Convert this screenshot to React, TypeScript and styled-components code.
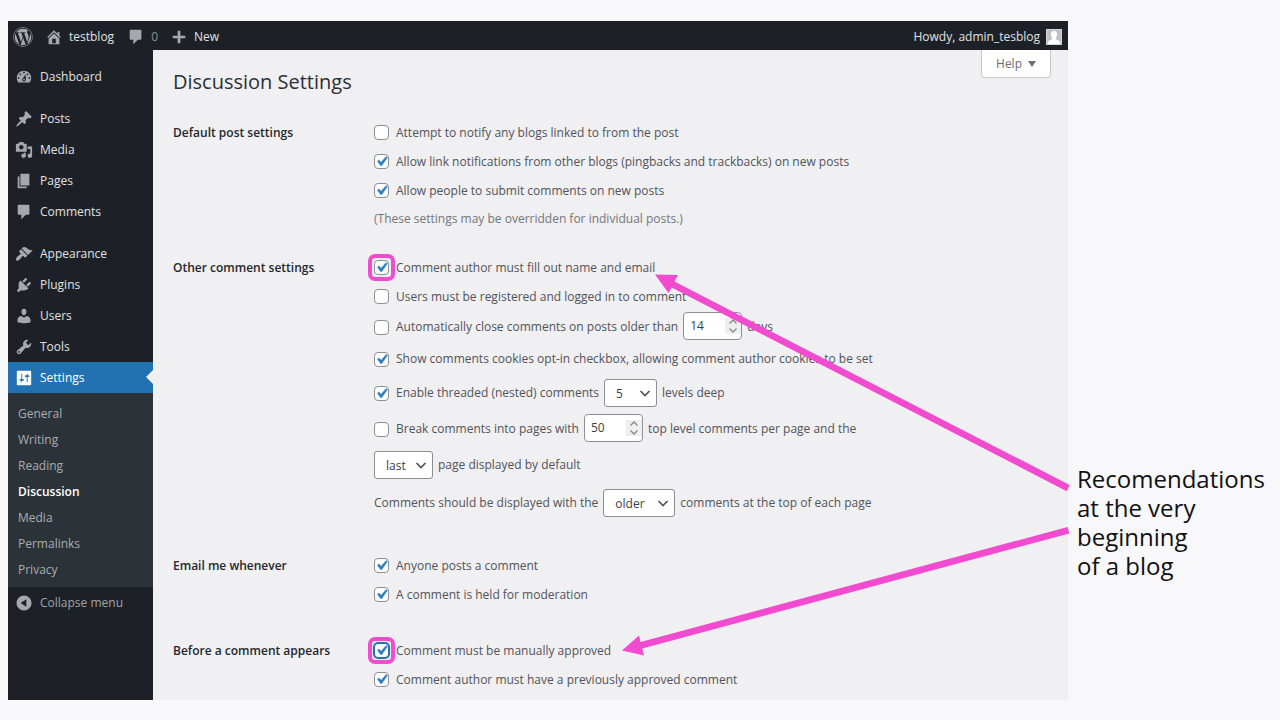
import React, { useId } from "react";
import styled, { createGlobalStyle, css } from "styled-components";
import { FaWordpress } from "react-icons/fa";

const GlobalStyle = createGlobalStyle`
  *, *::before, *::after { box-sizing: border-box; }
  body {
    margin: 0;
    background: #f8f8fa;
    font-family: "Open Sans", "Noto Sans", sans-serif;
    font-size: 12px;
    line-height: 16px;
    color: #50535a;
  }
  h1, h2, p, ul, fieldset { margin: 0; padding: 0; border: 0; }
  ul { list-style: none; }
  a { color: inherit; text-decoration: none; }
  button, input, select { font: inherit; color: inherit; margin: 0; }
`;

const pink = "#f14bd0";
const surface = "#f0eff1";

const Page = styled.div`
  position: relative;
  display: flex;
  min-height: 100vh;
  padding: 21px 0 20px 8px;
`;

const AdminWindow = styled.div`
  flex: 1;
  min-width: 0;
  display: flex;
  flex-direction: column;
  background: ${surface};
`;

const AdminBar = styled.header`
  display: flex;
  align-items: center;
  height: 29px;
  padding: 2px 6px 0 5px;
  background: #1d2127;
  color: #e0e1e3;
`;

const BarLink = styled.a<{ $gap?: number }>`
  display: flex;
  align-items: center;
  gap: 6px;
  margin-right: ${(p) => p.$gap ?? 0}px;
`;

const BarCount = styled.span`
  color: #8b8f94;
`;

const Account = styled.a`
  display: flex;
  align-items: center;
  gap: 6px;
  margin-left: auto;
`;

const Icon = styled.svg`
  display: block;
  flex: none;
  width: 18px;
  height: 18px;
  fill: #a5a9ae;
`;

const Logo = styled(FaWordpress)`
  width: 20px;
  height: 20px;
  color: #a5a9ae;
`;

const Columns = styled.div`
  flex: 1;
  display: flex;
`;

const Sidebar = styled.nav`
  flex: none;
  width: 145px;
  padding-top: 11px;
  background: #1d2127;
  color: #e0e1e3;
`;

const MenuGroup = styled.ul`
  & + & { margin-top: 11px; }
`;

const MenuLink = styled.a<{ $current?: boolean }>`
  position: relative;
  display: flex;
  align-items: center;
  gap: 7px;
  height: 31px;
  padding-left: 7px;
  ${(p) =>
    p.$current &&
    css`
      background: #2271b1;
      color: #fff;
      svg { fill: #fff; }
      &::after {
        content: "";
        position: absolute;
        right: 0;
        top: 8px;
        border: 7px solid transparent;
        border-left-width: 0;
        border-right-color: ${surface};
      }
    `}
`;

const Submenu = styled.ul`
  padding: 8px 0 4px 10px;
  background: #2c3338;
  color: #a9adb2;
  line-height: 26px;
`;

const SubLink = styled.a<{ $current?: boolean }>`
  display: block;
  ${(p) => p.$current && "color: #fff; font-weight: 600;"}
`;

const CollapseButton = styled.button`
  display: flex;
  align-items: center;
  gap: 7px;
  width: 100%;
  height: 31px;
  padding: 0 0 0 7px;
  border: 0;
  background: none;
  color: #a0a4a9;
`;

const Main = styled.main`
  flex: 1;
  min-width: 0;
  padding: 0 17px 4px 20px;
`;

const MainHeader = styled.div`
  display: flex;
  justify-content: space-between;
  align-items: flex-start;
  height: 68px;
`;

const Title = styled.h1`
  padding-top: 18px;
  font-size: 20px;
  font-weight: 400;
  line-height: 28px;
  color: #2b2f35;
`;

const HelpTab = styled.button`
  display: flex;
  align-items: center;
  gap: 6px;
  height: 28px;
  padding: 0 14px;
  border: 1px solid #c6c7ca;
  border-top: 0;
  border-radius: 0 0 4px 4px;
  background: #fff;
  color: #6a6e74;

  &::after {
    content: "";
    border: 4px solid transparent;
    border-top: 6px solid #6a6e74;
    border-bottom: 0;
  }
`;

const Group = styled.section<{ $after?: number }>`
  display: grid;
  grid-template-columns: 200px 1fr;
  margin-bottom: ${(p) => p.$after ?? 28}px;

  &:last-child { margin-bottom: 0; }
`;

const GroupTitle = styled.h2`
  font-size: 12px;
  font-weight: 600;
  line-height: 29px;
  color: #24282e;
`;

const Row = styled.div<{ $height?: number }>`
  display: flex;
  align-items: center;
  gap: 5px;
  height: ${(p) => p.$height ?? 29}px;
  padding-left: 1px;
  white-space: nowrap;
`;

const Note = styled.p`
  line-height: 28px;
  padding-left: 1px;
  color: #73767b;
`;

const CheckLabel = styled.label`
  display: flex;
  align-items: center;
  gap: 7px;
`;

const CheckWrap = styled.span<{ $marked?: boolean }>`
  position: relative;
  display: block;
  width: 15px;
  height: 15px;
  ${(p) => p.$marked && `border-radius: 1px; outline: 4px solid ${pink}; outline-offset: 2px;`}
`;

const CheckInput = styled.input<{ $focused?: boolean }>`
  appearance: none;
  display: block;
  width: 15px;
  height: 15px;
  border: 1px solid #8c8f94;
  border-radius: 4px;
  background: #fff;
  ${(p) => p.$focused && "border-color: #2271b1; box-shadow: 0 0 0 1px #2271b1;"}

  & + svg { visibility: hidden; }
  &:checked + svg { visibility: visible; }
`;

const CheckMark = styled.svg`
  position: absolute;
  inset: -2px;
  width: 19px;
  height: 19px;
  fill: #2f7fc0;
  stroke: #2f7fc0;
  stroke-width: 0.6;
  pointer-events: none;
`;

const NumberWrap = styled.span`
  position: relative;
  display: block;
  margin-bottom: 3px;
`;

const NumberInput = styled.input`
  appearance: textfield;
  display: block;
  width: 59px;
  height: 28px;
  padding: 0 20px 0 6px;
  border: 1px solid #8c8f94;
  border-radius: 4px;
  background: #fff;
  color: #3a3e44;

  &::-webkit-inner-spin-button { display: none; }
`;

const Spinner = styled.svg`
  position: absolute;
  right: 1px;
  top: 6px;
  width: 16px;
  height: 16px;
  background: #efeff0;
  fill: none;
  stroke: #85888c;
  stroke-width: 1.3;
  pointer-events: none;
`;

const SelectWrap = styled.span`
  position: relative;
  display: block;
`;

const SelectBox = styled.select<{ $width: number }>`
  appearance: none;
  display: block;
  width: ${(p) => p.$width}px;
  height: 28px;
  padding: 2px 20px 0 11px;
  border: 1px solid #8c8f94;
  border-radius: 3px;
  background: #fff;
  color: #3a3e44;
`;

const Chevron = styled.svg`
  position: absolute;
  right: 6px;
  top: 10px;
  width: 12px;
  height: 9px;
  fill: none;
  stroke: #50535a;
  stroke-width: 1.7;
  pointer-events: none;
`;

const Callout = styled.aside`
  flex: none;
  width: 212px;
  padding: 443px 0 0 9px;
  color: #111;
  font-size: 24px;
  line-height: 29px;
`;

const Arrows = styled.svg`
  position: absolute;
  left: 620px;
  top: 270px;
  width: 450px;
  height: 390px;
  fill: ${pink};
  stroke: none;
  pointer-events: none;
`;

const paths = {
  dashboard:
    "M3.76 16h12.48c1.1-1.37 1.76-3.11 1.76-5 0-4.42-3.58-8-8-8s-8 3.58-8 8c0 1.89.66 3.63 1.76 5zM10 4c.55 0 1 .45 1 1s-.45 1-1 1-1-.45-1-1 .45-1 1-1zM6 6c.55 0 1 .45 1 1s-.45 1-1 1-1-.45-1-1 .45-1 1-1zm8 0c.55 0 1 .45 1 1s-.45 1-1 1-1-.45-1-1 .45-1 1-1zm-5.37 5.55L12 7v6c0 1.1-.9 2-2 2s-2-.9-2-2c0-.57.24-1.08.63-1.45zM4 10c.55 0 1 .45 1 1s-.45 1-1 1-1-.45-1-1 .45-1 1-1zm12 0c.55 0 1 .45 1 1s-.45 1-1 1-1-.45-1-1 .45-1 1-1zm-5 3c0-.55-.45-1-1-1s-1 .45-1 1 .45 1 1 1 1-.45 1-1z",
  posts:
    "M10.44 3.02l1.82-1.82 6.36 6.35-1.83 1.82c-1.05-.68-2.48-.57-3.41.36l-.75.75c-.92.93-1.04 2.35-.35 3.41l-1.83 1.82-2.41-2.41-2.8 2.79c-.42.42-3.38 2.71-3.8 2.29s1.86-3.39 2.28-3.81l2.79-2.79L4.1 9.36l1.83-1.82c1.05.69 2.48.57 3.4-.36l.75-.75c.93-.92 1.05-2.35.36-3.41z",
  media:
    "M13 11V4c0-.55-.45-1-1-1h-1.67L9 1H5L3.67 3H2c-.55 0-1 .45-1 1v7c0 .55.45 1 1 1h10c.55 0 1-.45 1-1zM7 4.5c1.38 0 2.5 1.12 2.5 2.5S8.38 9.5 7 9.5 4.5 8.38 4.5 7 5.62 4.5 7 4.5zM14 6h5v10.5c0 1.38-1.12 2.5-2.5 2.5S14 17.88 14 16.5s1.12-2.5 2.5-2.5c.17 0 .34.02.5.05V9h-3V6zm-4 8.05V13h2v3.5c0 1.38-1.12 2.5-2.5 2.5S7 17.88 7 16.5 8.12 14 9.5 14c.17 0 .34.02.5.05z",
  pages: "M6 15V2h10v13H6zm-1 1h8v2H3V5h2v11z",
  comments:
    "M4 2h11c.6 0 1 .4 1 1v9c0 .6-.4 1-1 1h-3l-5 5v-5H4c-.6 0-1-.4-1-1V3c0-.6.4-1 1-1z",
  appearance:
    "M14.48 11.06L7.41 3.99l1.5-1.5c.5-.56 2.3-.47 3.51.32 1.21.8 1.43 1.28 2.91 2.1 1.18.64 2.45 1.26 4.45.85zm-.71.71L6.7 4.7 4.93 6.47c-.39.39-.39 1.02 0 1.41l1.06 1.06c.39.39.39 1.03 0 1.42-.6.6-1.43 1.11-2.21 1.69-.35.26-.7.53-1.01.84C1.43 14.23.4 16.08 1.4 17.07c.99 1 2.84-.03 4.18-1.36.31-.31.58-.66.85-1.02.57-.78 1.08-1.61 1.69-2.21.39-.39 1.02-.39 1.41 0l1.06 1.06c.39.39 1.02.39 1.41 0z",
  plugins:
    "M13.11 4.36L9.87 7.6 8 5.73l3.24-3.24c.35-.34 1.05-.2 1.56.32.52.51.66 1.21.31 1.55zm-8 1.77l.91-1.12 9.01 9.01-1.19.84c-.71.71-2.63 1.16-3.82 1.16H6.14L4.9 17.26c-.59.59-1.54.59-2.12 0-.59-.58-.59-1.53 0-2.12l1.24-1.24v-3.88c0-1.13.4-3.19 1.09-3.89zm7.26 3.97l3.24-3.24c.34-.35 1.04-.21 1.55.31.52.51.66 1.21.31 1.55l-3.24 3.25z",
  users:
    "M10 9.25c-2.27 0-2.73-3.44-2.73-3.44C7 4.02 7.82 2 9.97 2c2.16 0 2.98 2.02 2.71 3.81 0 0-.41 3.44-2.68 3.44zm0 2.57L12.72 10c2.39 0 4.52 2.33 4.52 4.53v2.49s-3.65 1.13-7.24 1.13c-3.65 0-7.24-1.13-7.24-1.13v-2.49c0-2.25 1.94-4.48 4.47-4.48z",
  tools:
    "M16.68 9.77c-1.34 1.34-3.3 1.67-4.95.99l-5.41 6.52c-.99.99-2.59.99-3.58 0s-.99-2.59 0-3.57l6.52-5.42c-.68-1.65-.35-3.61.99-4.95 1.28-1.28 3.12-1.62 4.72-1.06l-2.89 2.89 2.82 2.82 2.86-2.87c.53 1.58.18 3.39-1.08 4.65zM3.81 16.21c.4.39 1.04.39 1.43 0 .4-.4.4-1.04 0-1.43-.39-.4-1.03-.4-1.43 0-.39.39-.39 1.03 0 1.43z",
  settings:
    "M18 17V3c0-.6-.4-1-1-1H3c-.6 0-1 .4-1 1v14c0 .6.4 1 1 1h14c.6 0 1-.4 1-1zM8 11h1c.55 0 1 .45 1 1s-.45 1-1 1H8v1.5c0 .28-.22.5-.5.5s-.5-.22-.5-.5V13H6c-.55 0-1-.45-1-1s.45-1 1-1h1V5.5c0-.28.22-.5.5-.5s.5.22.5.5V11zm5-2h-1c-.55 0-1-.45-1-1s.45-1 1-1h1V5.5c0-.28.22-.5.5-.5s.5.22.5.5V7h1c.55 0 1 .45 1 1s-.45 1-1 1h-1v5.5c0 .28-.22.5-.5.5s-.5-.22-.5-.5V9z",
  home: "M16 8.5l1.53 1.53-1.06 1.06L10 4.6l-6.47 6.49-1.06-1.06L10 2.5l4 4v-2h2v4zm-6-2.46l6 5.99V18H4v-5.97zM12 17v-5H8v5h4z",
  plus: "M17 8.5v3h-5.5V17h-3v-5.5H3v-3h5.5V3h3v5.5z",
  collapse:
    "M10 1.6a8.4 8.4 0 1 0 0 16.8 8.4 8.4 0 0 0 0-16.8zM12.6 5.8v8.4L6.2 10z",
};

type IconName = keyof typeof paths;

const Dashicon = ({ name }: { name: IconName }) => (
  <Icon viewBox="0 0 20 20" aria-hidden="true">
    <path fillRule="evenodd" d={paths[name]} />
  </Icon>
);

interface CheckProps {
  label: string;
  checked?: boolean;
  marked?: boolean;
  focused?: boolean;
}

const Check = ({ label, checked, marked, focused }: CheckProps) => {
  const id = useId();
  return (
    <CheckLabel htmlFor={id}>
      <CheckWrap $marked={marked}>
        <CheckInput id={id} type="checkbox" defaultChecked={checked} $focused={focused} />
        <CheckMark viewBox="0 0 20 20" aria-hidden="true">
          <path d="M14.83 4.89l1.34.94-5.81 8.38H9.02L5.78 9.67l1.34-1.25 2.57 2.4z" />
        </CheckMark>
      </CheckWrap>
      {label}
    </CheckLabel>
  );
};

const NumberField = ({ value, label }: { value: number; label: string }) => (
  <NumberWrap>
    <NumberInput type="number" defaultValue={value} aria-label={label} />
    <Spinner viewBox="0 0 16 16" aria-hidden="true">
      <path d="M4.5 5.5L8 2l3.5 3.5M4.5 10.500L8 14l3.5-3.5" />
    </Spinner>
  </NumberWrap>
);

const SelectField = ({ options, label, width }: { options: string[]; label: string; width: number }) => (
  <SelectWrap>
    <SelectBox aria-label={label} $width={width}>
      {options.map((o) => (
        <option key={o}>{o}</option>
      ))}
    </SelectBox>
    <Chevron viewBox="0 0 12 9" aria-hidden="true">
      <path d="M1.5 2L6 6.5 10.5 2" />
    </Chevron>
  </SelectWrap>
);

const menu: { name: IconName; label: string; current?: boolean }[][] = [
  [{ name: "dashboard", label: "Dashboard" }],
  [
    { name: "posts", label: "Posts" },
    { name: "media", label: "Media" },
    { name: "pages", label: "Pages" },
    { name: "comments", label: "Comments" },
  ],
  [
    { name: "appearance", label: "Appearance" },
    { name: "plugins", label: "Plugins" },
    { name: "users", label: "Users" },
    { name: "tools", label: "Tools" },
    { name: "settings", label: "Settings", current: true },
  ],
];

const submenu = ["General", "Writing", "Reading", "Discussion", "Media", "Permalinks", "Privacy"];

export default function App() {
  return (
    <>
      <GlobalStyle />
      <Page>
        <AdminWindow>
          <AdminBar>
            <BarLink href="#about" $gap={12} aria-label="About WordPress">
              <Logo />
            </BarLink>
            <BarLink href="#site" $gap={13}>
              <Dashicon name="home" />
              testblog
            </BarLink>
            <BarLink href="#comments" $gap={12}>
              <Dashicon name="comments" />
              <BarCount>0</BarCount>
            </BarLink>
            <BarLink href="#new">
              <Dashicon name="plus" />
              New
            </BarLink>
            <Account href="#profile">
              Howdy, admin_tesblog
              <svg width="16" height="16" viewBox="0 0 16 16" aria-hidden="true">
                <rect width="16" height="16" fill="#d5d6d8" />
                <rect x="1" y="1" width="14" height="14" fill="#bfc1c4" />
                <path
                  fill="#fff"
                  d="M8 2c2.2 0 3.3 1.6 3.2 3.5-.1 1.7-.8 2.7-1.4 3.4v1.3c1.6.6 3.4 1.3 4.2 2.7V15H2v-2.1c.8-1.4 2.6-2.1 4.2-2.7V8.900C5.6 8.2 4.9 7.2 4.8 5.5 4.7 3.6 5.8 2 8 2z"
                />
              </svg>
            </Account>
          </AdminBar>
          <Columns>
            <Sidebar aria-label="Main menu">
              {menu.map((group, i) => (
                <MenuGroup key={i}>
                  {group.map((item) => (
                    <li key={item.label}>
                      <MenuLink href={`#${item.name}`} $current={item.current}>
                        <Dashicon name={item.name} />
                        {item.label}
                      </MenuLink>
                    </li>
                  ))}
                </MenuGroup>
              ))}
              <Submenu>
                {submenu.map((label) => (
                  <li key={label}>
                    <SubLink href={`#${label}`} $current={label === "Discussion"}>
                      {label}
                    </SubLink>
                  </li>
                ))}
              </Submenu>
              <CollapseButton type="button">
                <Dashicon name="collapse" />
                Collapse menu
              </CollapseButton>
            </Sidebar>
            <Main>
              <MainHeader>
                <Title>Discussion Settings</Title>
                <HelpTab type="button">Help</HelpTab>
              </MainHeader>
              <Group $after={20}>
                <GroupTitle>Default post settings</GroupTitle>
                <fieldset aria-label="Default post settings">
                  <Row><Check label="Attempt to notify any blogs linked to from the post" /></Row>
                  <Row><Check checked label="Allow link notifications from other blogs (pingbacks and trackbacks) on new posts" /></Row>
                  <Row><Check checked label="Allow people to submit comments on new posts" /></Row>
                  <Note>(These settings may be overridden for individual posts.)</Note>
                </fieldset>
              </Group>
              <Group>
                <GroupTitle>Other comment settings</GroupTitle>
                <fieldset aria-label="Other comment settings">
                  <Row><Check checked marked label="Comment author must fill out name and email" /></Row>
                  <Row><Check label="Users must be registered and logged in to comment" /></Row>
                  <Row $height={32}>
                    <Check label="Automatically close comments on posts older than" />
                    <NumberField value={14} label="Days before comments close" />
                    days
                  </Row>
                  <Row $height={32}>
                    <Check checked label="Show comments cookies opt-in checkbox, allowing comment author cookies to be set" />
                  </Row>
                  <Row $height={36}>
                    <Check checked label="Enable threaded (nested) comments" />
                    <SelectField options={["5", "6", "7"]} label="Levels deep" width={53} />
                    levels deep
                  </Row>
                  <Row $height={36}>
                    <Check label="Break comments into pages with" />
                    <NumberField value={50} label="Comments per page" />
                    top level comments per page and the
                  </Row>
                  <Row $height={36}>
                    <SelectField options={["last", "first"]} label="Page displayed by default" width={59} />
                    page displayed by default
                  </Row>
                  <Row $height={40}>
                    Comments should be displayed with the
                    <SelectField options={["older", "newer"]} label="Comment order" width={72} />
                    comments at the top of each page
                  </Row>
                </fieldset>
              </Group>
              <Group $after={27}>
                <GroupTitle>Email me whenever</GroupTitle>
                <fieldset aria-label="Email me whenever">
                  <Row><Check checked label="Anyone posts a comment" /></Row>
                  <Row><Check checked label="A comment is held for moderation" /></Row>
                </fieldset>
              </Group>
              <Group>
                <GroupTitle>Before a comment appears</GroupTitle>
                <fieldset aria-label="Before a comment appears">
                  <Row><Check checked marked focused label="Comment must be manually approved" /></Row>
                  <Row><Check checked label="Comment author must have a previously approved comment" /></Row>
                </fieldset>
              </Group>
            </Main>
          </Columns>
        </AdminWindow>
        <Callout>
          Recomendations
          <br />
          at the very
          <br />
          beginning
          <br />
          of a blog
        </Callout>
        <Arrows viewBox="620 270 450 390" aria-hidden="true">
          <path d="M655 274.5L678 275l-3.5 6.6L1069.7 485l-3 6.2L671.6 287.6 668.5 293z" />
          <path d="M622 650.5L639 635.5l1.6 6.5L1067.6 527l1.7 6.5L642.3 648.6l1.7 6.9z" />
        </Arrows>
      </Page>
    </>
  );
}
